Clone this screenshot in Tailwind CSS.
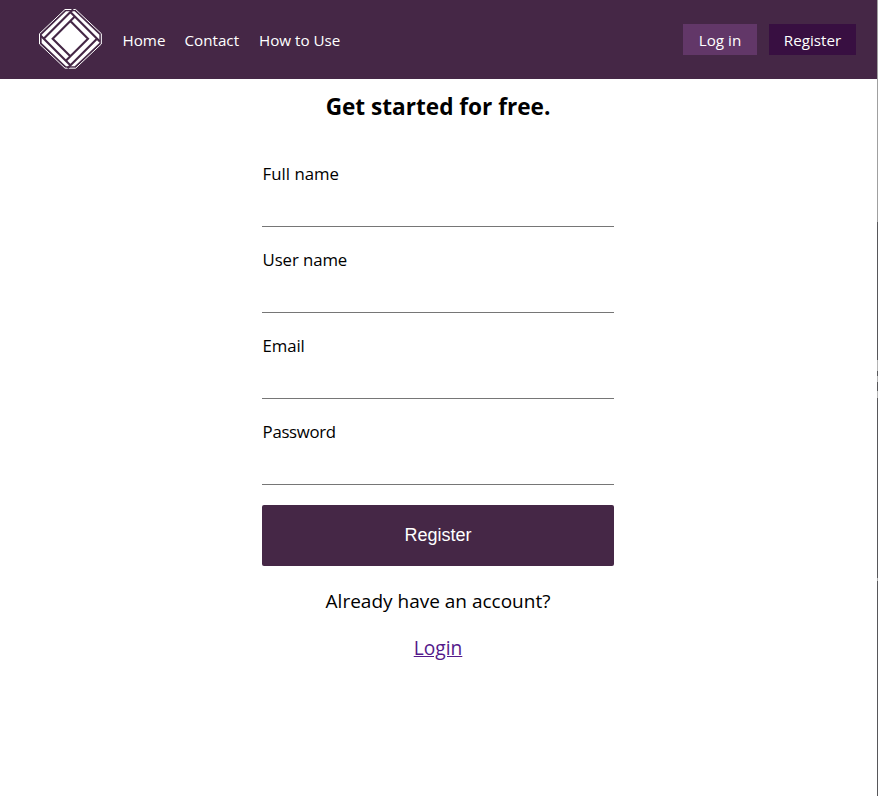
<!DOCTYPE html>
<html lang="en">
<head>
<meta charset="utf-8">
<title>Register</title>
<script src="https://cdn.jsdelivr.net/npm/@tailwindcss/browser@4"></script>
</head>
<body class="relative h-screen overflow-hidden bg-white text-black font-['Open_Sans','Noto_Sans',sans-serif]">
<header class="flex h-[79px] items-start bg-[#452746] pl-[30px] pr-[22px] text-white text-[15.2px]">
  <svg class="size-20 shrink-0" viewBox="0 0 240 240" fill="none">
    <path d="M105 28.500H137L214 101V132L137 204.500H105L28.500 132V101Z" stroke="#fff" stroke-width="3"/>
    <path d="M108 34H134L208 104V129L134 199H108L35 129V104Z" fill="#fff"/>
    <g stroke="#452746" stroke-width="9" transform="matrix(.5 .5 .5 -.5 121 116)">
      <path d="M-80 97V-80M-97 -80H80M80 -97V80M97 80H-80"/>
      <path d="M-53 80V-53H53M53 -80V53H-53"/>
    </g>
  </svg>
  <nav class="ml-[12.500px] mt-[30px] flex leading-5">
    <a class="w-[62px]">Home</a><a class="w-[74.500px]">Contact</a><a>How to Use</a>
  </nav>
  <div class="ml-auto mt-6 flex gap-3 leading-[32px]">
    <a class="h-[31px] w-[74px] bg-[#623768] text-center">Log in</a>
    <a class="h-[31px] w-[87px] bg-[#380f41] text-center">Register</a>
  </div>
</header>
<main class="mx-auto flex w-[352px] flex-col -translate-x-px">
  <h1 class="mt-3 text-center text-[22.6px] font-bold leading-8 whitespace-nowrap">Get started for free.</h1>
  <form class="mt-[38px] flex flex-col text-[16.8px]">
    <label class="h-[86px] leading-[26px]"><span class="block pl-[0.6px]">Full name</span><input class="block h-10 w-full border-b border-[#767676] outline-none"></label>
    <label class="h-[86px] leading-[26px]"><span class="block pl-[0.6px] tracking-[-0.1px]">User name</span><input class="block h-10 w-full border-b border-[#767676] outline-none"></label>
    <label class="h-[86px] leading-[26px]"><span class="block pl-[0.6px] tracking-[-0.1px]">Email</span><input class="block h-10 w-full border-b border-[#767676] outline-none"></label>
    <label class="h-[86px] leading-[26px]"><span class="block pl-[0.6px] tracking-[-0.3px]">Password</span><input class="block h-10 w-full border-b border-[#767676] outline-none"></label>
    <button type="button" class="h-[61px] rounded-[2px] bg-[#452746] font-['Liberation_Sans',sans-serif] text-[18px] font-normal text-white">Register</button>
  </form>
  <p class="mt-5 text-center text-[19px] leading-[30px]">Already have an account?</p>
  <a class="mt-[17px] self-center text-[19.2px] leading-[30px] text-[#551a8b] underline">Login</a>
</main>
<div class="absolute right-0 top-0 flex h-full w-px flex-col bg-[#57575a]">
  <i class="h-[222px] bg-[#a0a0a0]"></i>
  <i class="mt-[138px] h-[11px] bg-[#b5b5b5]"></i>
  <i class="mt-[5px] h-[6px] bg-[#b5b5b5]"></i>
  <i class="mt-[9px] h-[7px] bg-[#b5b5b5]"></i>
  <i class="mt-[180px] h-[3px] bg-[#b5b5b5]"></i>
</div>
</body>
</html>
